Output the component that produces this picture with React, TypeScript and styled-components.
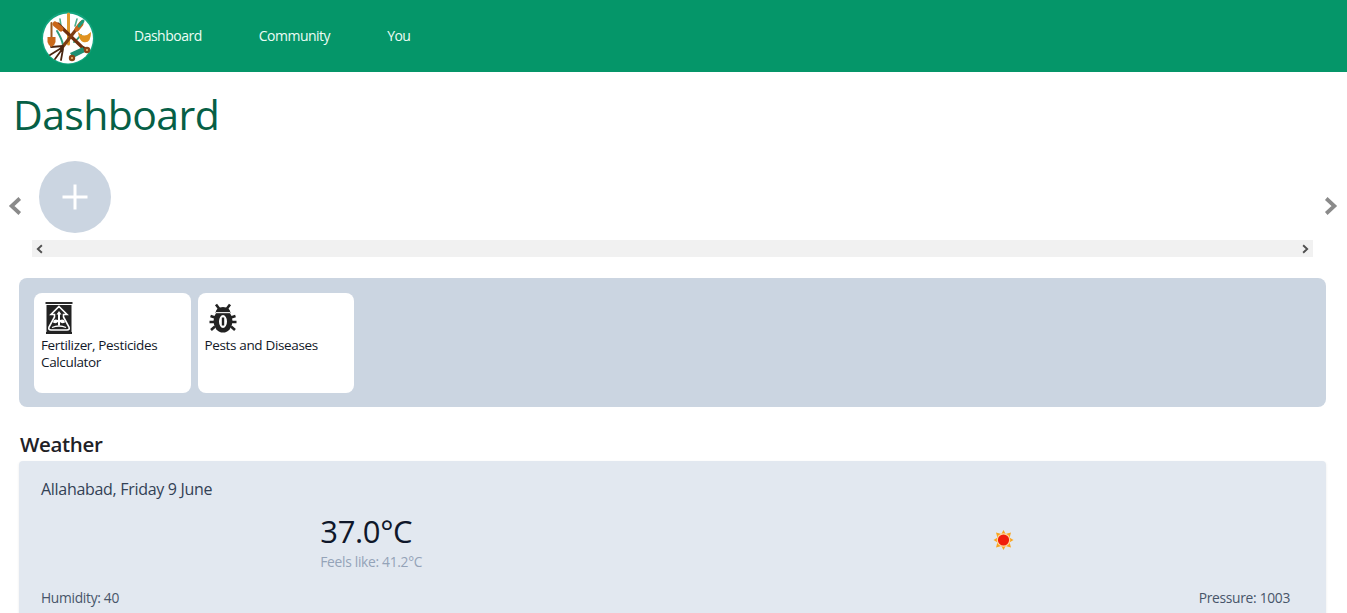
import * as React from 'react';
import styled, { createGlobalStyle } from 'styled-components';

const Global = createGlobalStyle`
  html, body {
    margin: 0;
    padding: 0;
    overflow: hidden;
    background: #ffffff;
    font-family: "Open Sans", "Noto Sans", sans-serif;
    font-size: 14px;
    letter-spacing: -0.3px;
  }
`;

const Page = styled.div`
  width: 1347px;
  height: 613px;
  overflow: hidden;
`;

const NavBar = styled.nav`
  height: 72px;
  background: #059669;
  display: flex;
  align-items: center;
  padding-left: 41px;
`;

const LogoWrap = styled.div`
  width: 54px;
  height: 54px;
  margin-right: 39px;
  margin-top: 3px;
`;

const NavLinks = styled.div`
  display: flex;
  gap: 57px;
`;

const NavLink = styled.a`
  color: #ecfdf5;
  font-size: 14px;
  line-height: 20px;
  letter-spacing: -0.5px;
`;

const Title = styled.h1`
  margin: 0;
  padding: 14px 0 0 13px;
  height: 74px;
  box-sizing: border-box;
  font-size: 41px;
  line-height: 56px;
  font-weight: 400;
  letter-spacing: -0.6px;
  color: #065f46;
`;

const Carousel = styled.div`
  display: flex;
  align-items: flex-start;
  padding-top: 15px;
  height: 132px;
  box-sizing: border-box;
`;

const ArrowSlot = styled.div<{ $width: number }>`
  flex: 0 0 ${(p) => p.$width}px;
  height: 90px;
  display: flex;
  align-items: center;
  justify-content: center;
  color: #8a8a8a;
`;

const Scroller = styled.div`
  flex: 1;
  display: flex;
  flex-direction: column;
  gap: 7px;
  min-width: 0;
`;

const AddRow = styled.div`
  display: flex;
  padding-left: 7px;
`;

const AddButton = styled.div`
  width: 72px;
  height: 72px;
  border-radius: 50%;
  background: #cbd5e1;
  display: flex;
  align-items: center;
  justify-content: center;
  color: #ffffff;
`;

const ScrollTrack = styled.div`
  height: 17px;
  background: #f1f1f1;
  display: flex;
  align-items: center;
  justify-content: space-between;
  padding: 0 3px;
  color: #505050;
`;

const ToolsPanel = styled.section`
  margin: 0 21px 0 19px;
  height: 129px;
  box-sizing: border-box;
  background: #cbd5e1;
  border-radius: 8px;
  padding: 15px;
  display: flex;
  gap: 7px;
`;

const ToolCard = styled.div`
  width: 156.5px;
  height: 100px;
  box-sizing: border-box;
  background: #ffffff;
  border-radius: 8px;
  padding: 9px 7px;
  color: #111827;
  font-size: 13.5px;
  line-height: 17px;
  letter-spacing: -0.35px;
`;

const ToolIcon = styled.div`
  height: 35px;
  margin-left: 4px;
`;

const SectionTitle = styled.h2`
  margin: 0;
  padding: 23px 0 0 20px;
  height: 54px;
  box-sizing: border-box;
  font-size: 20.5px;
  line-height: 28px;
  font-weight: 600;
  letter-spacing: -0.35px;
  color: #1f2126;
`;

const WeatherCard = styled.section`
  margin: 0 21px 0 19px;
  padding: 18px 22px;
  background: #e2e8f0;
  border-radius: 4px;
  box-shadow: 0 1px 3px rgba(0, 0, 0, 0.08);
  height: 240px;
  box-sizing: border-box;
`;

const Location = styled.div`
  font-size: 16px;
  line-height: 21px;
  letter-spacing: -0.3px;
  color: #334155;
`;

const Current = styled.div`
  display: flex;
  justify-content: space-around;
  align-items: center;
  margin-top: 11px;
  padding-left: 2px;
`;

const TempBlock = styled.div`
  width: 102px;
`;

const Temp = styled.div`
  font-size: 31px;
  line-height: 40px;
  letter-spacing: -0.35px;
  color: #0f172a;
`;

const Feels = styled.div`
  font-size: 13.8px;
  line-height: 20px;
  margin-top: 1px;
  color: #94a3b8;
`;

const Stats = styled.div`
  display: flex;
  justify-content: space-between;
  margin-top: 16px;
  padding-right: 14px;
  font-size: 13.8px;
  line-height: 20px;
  color: #475569;
`;

const Chevron = ({ dir, size, width }: { dir: 'left' | 'right'; size: number; width: number }) => (
  <svg width={size} height={size} viewBox="0 0 16 16" fill="none" stroke="currentColor" strokeWidth={width}>
    <path d={dir === 'left' ? 'M11 2 L4.5 8 L11 14' : 'M5 2 L11.5 8 L5 14'} />
  </svg>
);

const Logo = () => (
  <svg width="54" height="54" viewBox="0 0 54 54">
    <circle cx="27" cy="27" r="26.5" fill="#12a57e" />
    <circle cx="27" cy="27.500" r="25" fill="#ffffff" />
    <g fill="none" strokeLinecap="round">
      <path d="M16 20 q5 8 6 14" stroke="#2e9d7c" strokeWidth="2" />
      <path d="M40 24 q-4 5 -7 7" stroke="#2e9d7c" strokeWidth="2" />
      <path d="M19 8 l1 7 M36 8 l-2 7" stroke="#4bae8c" strokeWidth="1.6" />
      <path d="M10.500 12 V28" stroke="#9a5a1c" strokeWidth="2" />
      <path d="M27.500 3 V33" stroke="#e09a2e" strokeWidth="3" />
      <path d="M17 13 L43 38" stroke="#6f2f0e" strokeWidth="3.2" />
      <path d="M41 11 L20 38" stroke="#7d3d13" strokeWidth="3.2" />
      <path d="M14 13 L20 18" stroke="#c9661a" strokeWidth="5" />
      <path d="M40 13 L36 18" stroke="#c9661a" strokeWidth="5" />
      <path d="M42 10 L38 15" stroke="#1d9a7a" strokeWidth="3" />
      <path d="M22 35 L10 36 M22 36 L9 44 M22 37 L14 48 M22 38 L20 49" stroke="#4a2510" strokeWidth="1.8" />
    </g>
    <path d="M6.500 26 H14.500 V31 Q14 34 10.500 36 Q7 34 6.500 31 Z" fill="#c9691a" />
    <path d="M37 21 Q43 28 50 21 Q50 33 42 31 Q38 29 37 21 Z" fill="#e0921f" />
    <path d="M29 42 L42 36 L44 41 L32 47 Z" fill="#1f8f73" />
    <path d="M42 36 L48 38" stroke="#5a2c10" strokeWidth="1.8" />
    <circle cx="31" cy="47" r="3.200" fill="#8a4517" />
    <circle cx="46" cy="39" r="3.200" fill="#8a4517" />
    <circle cx="31" cy="47" r="1" fill="#f2c27a" />
    <circle cx="46" cy="39" r="1" fill="#f2c27a" />
  </svg>
);

const BagIcon = () => (
  <svg width="28" height="33" viewBox="0 0 28 33">
    <rect x="0.500" y="0" width="27" height="2" fill="#2a2a2a" />
    <rect x="1.500" y="3" width="25" height="27" fill="#222" />
    <rect x="1" y="30" width="26" height="2" fill="#222" />
    <path d="M14 4.500 L22 12.500 H18.500 V15 L24 25 Q25 28 22 28 H6 Q3 28 4 25 L9.500 15 V12.500 H6 Z" fill="none" stroke="#fff" strokeWidth="1.6" />
    <path d="M14 9 L16.500 12.500 H15 V18 Q19.500 16.500 20 20.500 Q16.500 22 15 20 L15 23.500 H13 V20 Q11 22 8 20.500 Q8.500 16.500 13 18 V12.500 H11.500 Z" fill="#fff" />
    <path d="M7 25.500 Q14 22.500 21 25.500" fill="none" stroke="#fff" strokeWidth="1.300" />
  </svg>
);

const BugIcon = () => (
  <svg width="28" height="31" viewBox="0 -2 28 31">
    <g stroke="#222" strokeWidth="2.6" fill="none">
      <path d="M7 0.500 L10 4.500 M21 0.500 L18 4.500" />
      <path d="M1.500 12 L6 13.500 M26.500 12 L22 13.500 M0.500 18 H5 M27.500 18 H23 M2 26 L6 22.500 M26 26 L22 22.500" />
    </g>
    <ellipse cx="14" cy="17" rx="9.500" ry="11.500" fill="#222" />
    <path d="M6.500 9 Q7 3 14 3 Q21 3 21.500 9 Z" fill="#222" />
    <rect x="7" y="8" width="14" height="1.200" fill="#e8e8e8" />
    <ellipse cx="14" cy="17.500" rx="4" ry="6.500" fill="#fff" />
    <rect x="12.800" y="13.500" width="2.400" height="8" fill="#222" />
  </svg>
);

const SunIcon = () => (
  <svg width="50" height="50" viewBox="0 0 50 50">
    <g transform="translate(-1 -2)">
      <g fill="#f9a51f">
        <path d="M27.500 15 L30.500 20.500 H24.500 Z" />
        <path d="M27.500 35 L30.500 29.500 H24.500 Z" />
        <path d="M17.500 25 L22.500 22 V28 Z" />
        <path d="M37.500 25 L32.500 22 V28 Z" />
        <path d="M20 17.500 L25.500 19 L21.500 23 Z" />
        <path d="M35 17.500 L29.500 19 L33.500 23 Z" />
        <path d="M20 32.500 L25.500 31 L21.500 27 Z" />
        <path d="M35 32.500 L29.500 31 L33.500 27 Z" />
      </g>
      <circle cx="27.500" cy="25" r="6.800" fill="#ffd9a0" />
      <circle cx="27.500" cy="25" r="5.600" fill="#f01e0c" />
    </g>
  </svg>
);

const PlusIcon = () => (
  <svg width="26" height="26" viewBox="0 0 26 26" fill="none" stroke="currentColor" strokeWidth="3">
    <path d="M13 0.500 V25.500 M0.500 13 H25.500" />
  </svg>
);

export default function App() {
  return (
    <Page>
      <Global />
      <NavBar>
        <LogoWrap>
          <Logo />
        </LogoWrap>
        <NavLinks>
          <NavLink>Dashboard</NavLink>
          <NavLink>Community</NavLink>
          <NavLink>You</NavLink>
        </NavLinks>
      </NavBar>
      <Title>Dashboard</Title>
      <Carousel>
        <ArrowSlot $width={32}>
          <Chevron dir="left" size={20} width={3} />
        </ArrowSlot>
        <Scroller>
          <AddRow>
            <AddButton>
              <PlusIcon />
            </AddButton>
          </AddRow>
          <ScrollTrack>
            <Chevron dir="left" size={10} width={3} />
            <Chevron dir="right" size={10} width={3} />
          </ScrollTrack>
        </Scroller>
        <ArrowSlot $width={34}>
          <Chevron dir="right" size={20} width={3} />
        </ArrowSlot>
      </Carousel>
      <ToolsPanel>
        <ToolCard>
          <ToolIcon>
            <BagIcon />
          </ToolIcon>
          Fertilizer, Pesticides Calculator
        </ToolCard>
        <ToolCard>
          <ToolIcon>
            <BugIcon />
          </ToolIcon>
          Pests and Diseases
        </ToolCard>
      </ToolsPanel>
      <SectionTitle>Weather</SectionTitle>
      <WeatherCard>
        <Location>Allahabad, Friday 9 June</Location>
        <Current>
          <TempBlock>
            <Temp>37.0°C</Temp>
            <Feels>Feels like: 41.2°C</Feels>
          </TempBlock>
          <SunIcon />
        </Current>
        <Stats>
          <span>Humidity: 40</span>
          <span>Pressure: 1003</span>
        </Stats>
      </WeatherCard>
    </Page>
  );
}
